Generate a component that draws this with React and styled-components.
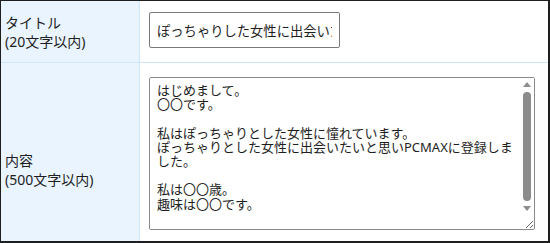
import React from 'react';
import styled, { createGlobalStyle } from 'styled-components';

const GlobalStyle = createGlobalStyle`
  html, body { margin: 0; padding: 0; background: #fff; }
  body { font-family: "Noto Sans", "Noto Sans CJK JP", sans-serif; color: #1e1e1e; }
`

/* フォーム表 */
const FormTable = styled.div`
  width: 550px;
  height: 243px;
  box-sizing: border-box;
  border-style: solid;
  border-color: #1e1e1e;
  border-width: 1px 2px 2px 1px;
  display: grid;
  grid-template-columns: 138px 1fr;
  grid-template-rows: 61px 1fr;
  background: #cfe6fb;
  gap: 1px;
`
const Label = styled.div`
  background: #e9f4ff;
  display: flex;
  flex-direction: column;
  justify-content: center;
  padding: ${props => props.pad || '0 0 0 4px'};
  font-size: 14px;
  line-height: 19px;
  color: #1e1e1e;
`
const Field = styled.div`
  background: #fff;
  padding: ${props => props.pad || '0'};
  display: flex;
  align-items: flex-start;
`
const TitleInput = styled.input`
  width: 191px;
  height: 36px;
  box-sizing: border-box;
  border: 1px solid #7a7a7a;
  border-radius: 2px;
  padding: 0 7px;
  font-family: "Noto Sans", "Noto Sans CJK JP", sans-serif;
  font-size: 13.3px;
  color: #1e1e1e;
  outline: none;
`
/* テキストエリア＋スクロールバー */
const AreaWrap = styled.div`
  position: relative;
  width: 386px;
  height: 153px;
`
const BodyArea = styled.textarea`
  display: block;
  width: 100%;
  height: 100%;
  box-sizing: border-box;
  border: 1px solid #8a8a8a;
  border-radius: 2px;
  padding: 5px 17px 3px 7px;
  font-family: "Noto Sans", "Noto Sans CJK JP", sans-serif;
  font-size: 13px;
  line-height: 14.2px;
  color: #1e1e1e;
  resize: both;
  outline: none;
  overflow-y: auto;
  scrollbar-width: none;
`
const ScrollBar = styled.div`
  position: absolute;
  top: 1px;
  right: 1px;
  width: 15px;
  bottom: 16px;
  background: #fff;
  display: flex;
  flex-direction: column;
  align-items: center;
  pointer-events: none;
`
const Arrow = styled.div`
  width: 0;
  height: 0;
  margin: ${props => props.down ? '5px 0 0' : '4px 0 0'};
  border-left: 4px solid transparent;
  border-right: 4px solid transparent;
  border-${props => props.down ? 'top' : 'bottom'}: 5px solid #8c8c8c;
`
const Thumb = styled.div`
  width: 8px;
  height: 109px;
  margin-top: 5px;
  border-radius: 4px;
  background: #8c8c8c;
`

const body = 'はじめまして。\n〇〇です。\n\n私はぽっちゃりとした女性に憧れています。\nぽっちゃりとした女性に出会いたいと思いPCMAXに登録しました。\n\n私は〇〇歳。\n趣味は〇〇です。\n\n'

export default function App() {
  return (
    <>
      <GlobalStyle />
      <FormTable>
        <Label>
          <span>タイトル</span>
          <span>(20文字以内)</span>
        </Label>
        <Field pad='11px 0 0 9px'>
          <TitleInput defaultValue='ぽっちゃりした女性に出会いたい' />
        </Field>
        <Label pad='36px 0 0 4px'>
          <span>内容</span>
          <span>(500文字以内)</span>
        </Label>
        <Field pad='14px 0 0 9px'>
          <AreaWrap>
            <BodyArea defaultValue={body} />
            <ScrollBar>
              <Arrow />
              <Thumb />
              <Arrow down />
            </ScrollBar>
          </AreaWrap>
        </Field>
      </FormTable>
    </>
  );
}
